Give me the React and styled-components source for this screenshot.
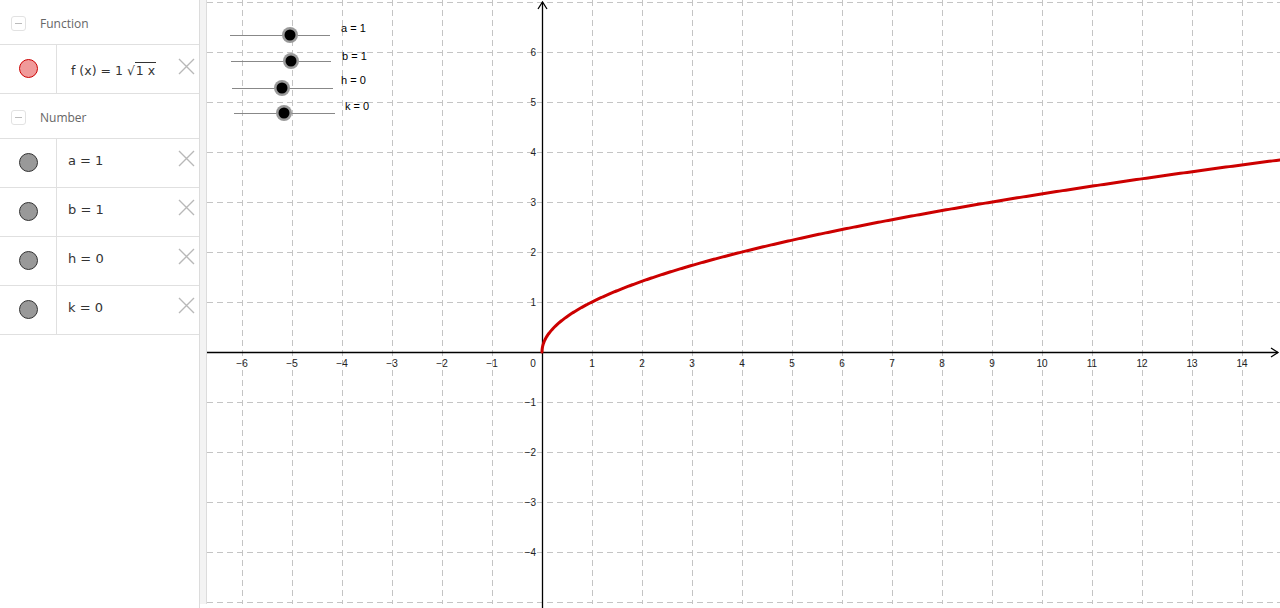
import styled, { createGlobalStyle } from "styled-components";

const Global = createGlobalStyle`
  html, body { margin: 0; padding: 0; background: #fff; }
  body { font-family: "Open Sans", "Liberation Sans", sans-serif; }
`;

const Page = styled.div`
  display: flex;
  width: 1280px;
  height: 608px;
  overflow: hidden;
`;

const Sidebar = styled.aside`
  width: 200px;
  flex: none;
  border-right: 1px solid #dcdcdc;
  box-sizing: border-box;
  display: flex;
  flex-direction: column;
`;

const Divider = styled.div`
  width: 6px;
  flex: none;
  height: 604px;
  background: #f3f3f3;
  border-right: 1px solid #dcdcdc;
`;

const Graphics = styled.div`
  flex: 1;
  height: 608px;
  position: relative;
`;

const GroupHeader = styled.div`
  height: 45px;
  flex: none;
  display: flex;
  align-items: center;
  gap: 14px;
  padding-left: 11px;
  padding-top: 2px;
  font-size: 12px;
  color: #666;
  border-bottom: 1px solid #e0e0e0;
  box-sizing: border-box;
`;

const Collapse = styled.span`
  width: 13px;
  height: 13px;
  border: 1px solid #e2e2e2;
  border-radius: 3px;
  display: flex;
  align-items: center;
  justify-content: center;
  &::after {
    content: "";
    width: 7px;
    height: 1px;
    background: #bbb;
  }
`;

const Row = styled.div`
  height: 49px;
  flex: none;
  display: flex;
  border-bottom: 1px solid #e0e0e0;
  box-sizing: border-box;
`;

const Marble = styled.div`
  width: 56px;
  flex: none;
  border-right: 1px solid #e0e0e0;
  display: flex;
  align-items: center;
  justify-content: center;
  padding-bottom: 1px;
  &::after {
    content: "";
    width: 17px;
    height: 17px;
    border-radius: 50%;
    background: ${(p) => p.$fill};
    border: 1px solid ${(p) => p.$stroke};
  }
`;

const Expr = styled.div`
  flex: 1;
  display: flex;
  align-items: center;
  padding-left: 11px;
  padding-bottom: 5px;
  font-family: "DejaVu Sans", sans-serif;
  font-size: 13px;
  color: #333;
  white-space: pre;
`;

const MathExpr = styled(Expr)`
  padding-left: 14px;
  padding-top: 4px;
  padding-bottom: 2px;
  font-size: 12.5px;
`;

const Root = styled.span`
  border-top: 1px solid #333;
  padding: 0 1px;
`;

const Close = styled.button`
  width: 28px;
  flex: none;
  border: none;
  background: none;
  padding: 0 4px ${(p) => (p.$math ? 6 : 10)}px 0;
  display: flex;
  align-items: center;
  justify-content: flex-end;
`;

const CloseIcon = () => (
  <svg width="17" height="17" viewBox="0 0 17 17">
    <path d="M1 1L16 16M16 1L1 16" stroke="#b8b8b8" strokeWidth="1.4" />
  </svg>
);

const numbers = [
  { n: "a", v: 1 },
  { n: "b", v: 1 },
  { n: "h", v: 0 },
  { n: "k", v: 0 },
];

const sliders = [
  { x1: 230, x2: 330, y: 35, k: 290, lx: 341, ly: 32, label: "a = 1" },
  { x1: 231, x2: 331, y: 61, k: 291, lx: 342, ly: 60, label: "b = 1" },
  { x1: 232, x2: 333, y: 88, k: 282, lx: 341, ly: 84, label: "h = 0" },
  { x1: 234, x2: 335, y: 113, k: 284, lx: 345, ly: 110, label: "k = 0" },
];

const OX = 207;
const X0 = 542 - OX;
const Y0 = 352;
const U = 50;

function Plot() {
  const W = 1280 - OX;
  const vx = [];
  for (let k = -6; k <= 14; k++) vx.push(k);
  const hy = [];
  for (let k = -5; k <= 7; k++) hy.push(k);
  let d = "";
  const xmax = (W - X0) / U;
  for (let i = 0; i <= 400; i++) {
    const t = (i / 400) ** 2 * xmax;
    const px = X0 + t * U;
    const py = Y0 - Math.sqrt(t) * U;
    d += (i ? "L" : "M") + px.toFixed(2) + " " + py.toFixed(2);
  }
  return (
    <svg width={W} height="608" style={{ display: "block" }}>
      <g stroke="#c4c4c4" strokeWidth="1" strokeDasharray="6 4">
        {vx.map((k) => k !== 0 && (
          <line key={"v" + k} x1={X0 + k * U + 0.5} x2={X0 + k * U + 0.5} y1="0" y2="604" />
        ))}
        {hy.map((k) => k !== 0 && (
          <line key={"h" + k} x1="0" x2={W} y1={Y0 - k * U + 0.5} y2={Y0 - k * U + 0.5} />
        ))}
      </g>
      <g stroke="#000" strokeWidth="1.3" fill="none">
        <line x1="0" x2={W - 2} y1={Y0 + 0.5} y2={Y0 + 0.5} />
        <path d={`M${W - 9} ${Y0 - 4}L${W - 2} ${Y0 + 0.5}L${W - 9} ${Y0 + 5}`} />
        <line x1={X0 + 0.5} x2={X0 + 0.5} y1="2" y2="608" />
        <path d={`M${X0 - 4} 9L${X0 + 0.5} 2L${X0 + 5} 9`} />
      </g>
      <g fontFamily="'Liberation Sans', Arial, sans-serif" fontSize="10" fill="#222">
        {vx.map((k) => k !== 0 && (
          <text key={"tx" + k} x={X0 + k * U} y={Y0 + 15} textAnchor="middle">
            {k < 0 ? "\u2212" + -k : k}
          </text>
        ))}
        <text x={X0 - 9} y={Y0 + 15} textAnchor="middle">0</text>
        {[6, 5, 4, 3, 2, 1, -1, -2, -3, -4].map((k) => (
          <text key={"ty" + k} x={X0 - 6} y={Y0 - k * U + 4} textAnchor="end">
            {k < 0 ? "\u2212" + -k : k}
          </text>
        ))}
      </g>
      <path d={d} stroke="#cc0000" strokeWidth="3" fill="none" strokeLinecap="round" />
      {sliders.map((s) => (
        <g key={s.label}>
          <line x1={s.x1 - OX} x2={s.x2 - OX} y1={s.y + 0.5} y2={s.y + 0.5} stroke="#888" strokeWidth="1" />
          <circle cx={s.k - OX} cy={s.y} r="8" fill="#9a9a9a" />
          <circle cx={s.k - OX} cy={s.y} r="5.5" fill="#000" />
          <text x={s.lx - OX} y={s.ly} fontFamily="'Liberation Sans', Arial, sans-serif" fontSize="11" fill="#000">
            {s.label}
          </text>
        </g>
      ))}
    </svg>
  );
}

export default function App() {
  return (
    <>
      <Global />
      <Page>
        <Sidebar>
          <GroupHeader>
            <Collapse />
            Function
          </GroupHeader>
          <Row>
            <Marble $fill="#f09a9a" $stroke="#cc0000" />
            <MathExpr>
              {"f (x) = 1 "}√<Root>1 x</Root>
            </MathExpr>
            <Close $math><CloseIcon /></Close>
          </Row>
          <GroupHeader>
            <Collapse />
            Number
          </GroupHeader>
          {numbers.map((r) => (
            <Row key={r.n}>
              <Marble $fill="#999" $stroke="#333" />
              <Expr>{`${r.n} = ${r.v}`}</Expr>
              <Close><CloseIcon /></Close>
            </Row>
          ))}
        </Sidebar>
        <Divider />
        <Graphics>
          <Plot />
        </Graphics>
      </Page>
    </>
  );
}
